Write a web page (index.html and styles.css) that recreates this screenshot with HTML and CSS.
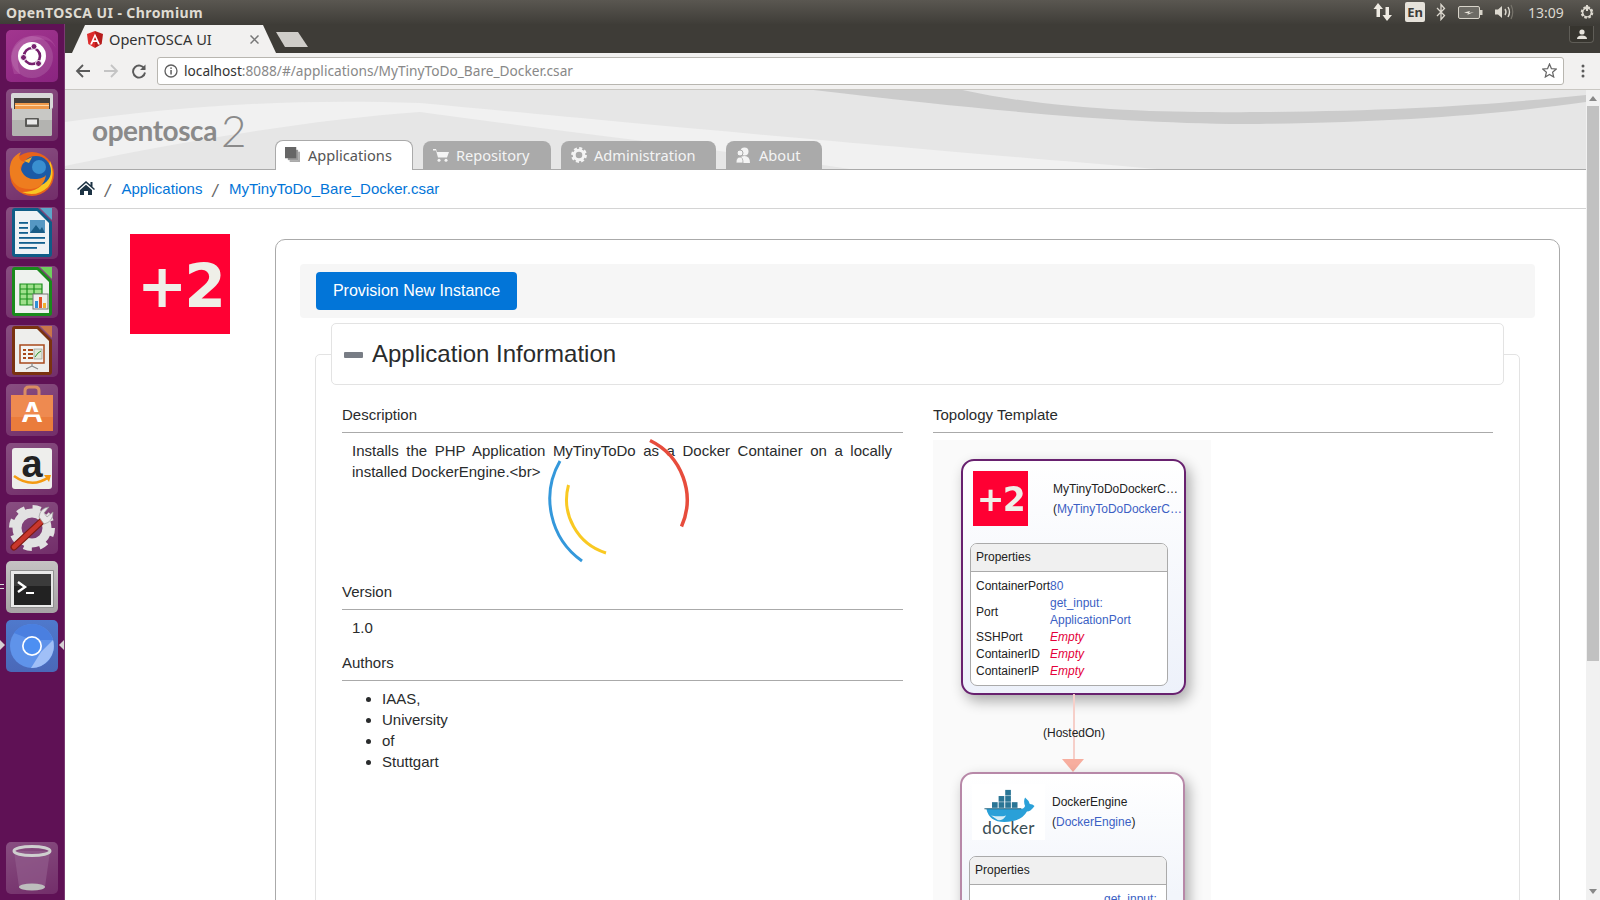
FILE: index.html
```html
<!DOCTYPE html>
<html lang="en">
<head>
<meta charset="utf-8">
<title>OpenTOSCA UI - Chromium</title>
<link rel="stylesheet" href="styles.css">
</head>
<body>
<div class="screen">
  <header class="panel">
    <span class="panel-title">OpenTOSCA UI - Chromium</span>
    <div class="tray">
      <svg class="tray-arrows" width="20" height="20" viewBox="0 0 20 20"><path d="M5 1 L10 7 H7 V15 H3.5 V7 H0.5 Z M14 19 L9.5 13 H12.500 V5 H16 V13 H19 Z" fill="#eeeae2"/></svg>
      <span class="tray-en">En</span>
      <svg class="tray-bt" width="10" height="18" viewBox="0 0 10 18"><path d="M1 5 L8.500 12.500 L5 16.500 V1.500 L8.500 5.500 L1 13" fill="none" stroke="#ddd9d0" stroke-width="1.300"/></svg>
      <svg class="tray-bat" width="25" height="13" viewBox="0 0 25 13"><rect x=".5" y=".5" width="21" height="12" rx="1.500" fill="#6d6b65" stroke="#d8d4ca"/><rect x="22" y="4" width="2.500" height="5" fill="#d8d4ca"/><path d="M6 6.500 L12 5 L11 7 L16 6 L9 9 L10.500 7.500Z" fill="#ece8de"/></svg>
      <svg class="tray-vol" width="20" height="16" viewBox="0 0 20 16"><path d="M1 5.500 H4 L8 2 V14 L4 10.500 H1Z" fill="#ddd9d0"/><path d="M11 5 Q13 8 11 11 M14 3 Q17 8 14 13" fill="none" stroke="#ddd9d0" stroke-width="1.400"/><path d="M17 1 Q20.500 8 17 15" fill="none" stroke="#77746c" stroke-width="1.200"/></svg>
      <span class="tray-time">13:09</span>
      <svg class="tray-power" width="16" height="16" viewBox="0 0 16 16"><circle cx="8" cy="8.500" r="5" fill="none" stroke="#ddd9d0" stroke-width="2.600" stroke-dasharray="2.400 1.500"/><circle cx="8" cy="8.500" r="4.400" fill="none" stroke="#ddd9d0" stroke-width="1.400"/><path d="M8 1 V7" stroke="#ddd9d0" stroke-width="2"/></svg>
    </div>
  </header>
  <div class="desktop">
    <nav class="launcher">
      <div class="tile tile-ubuntu">
        <svg viewBox="0 0 52 52"><path d="M8 44 Q-2 16 24 6 Q44 2 50 18 Q44 6 26 11 Q6 20 14 44Z" fill="#b65aa6" opacity=".45"/><circle cx="26" cy="27" r="21" fill="#fff" opacity=".13"/><circle cx="26" cy="26" r="14" fill="#fff"/><circle cx="26" cy="26" r="8" fill="none" stroke="#77216f" stroke-width="2.600"/><circle cx="28" cy="16.500" r="3" fill="#77216f" stroke="#fff"/><circle cx="17.500" cy="27.500" r="3" fill="#77216f" stroke="#fff"/><circle cx="32.500" cy="33.500" r="3" fill="#77216f" stroke="#fff"/></svg>
      </div>
      <div class="tile">
        <svg viewBox="0 0 52 52"><rect x="5" y="4" width="42" height="16" rx="2" fill="#d8d8d8"/><rect x="8" y="9" width="36" height="12" fill="#44403c"/><rect x="9" y="14" width="34" height="7" fill="#ef9a4a"/><rect x="9" y="16" width="34" height="1" fill="#ffd9a8"/><rect x="6" y="20" width="40" height="27" rx="1.500" fill="#b3b3b0"/><rect x="6" y="20" width="40" height="11" fill="#c8c8c5"/><rect x="19" y="29" width="14" height="9" rx="1" fill="#595956"/><rect x="21" y="30.500" width="10" height="5" fill="#e9e9e9"/></svg>
      </div>
      <div class="tile">
        <svg viewBox="0 0 52 52"><circle cx="26" cy="26" r="22" fill="#e8621a"/><path d="M44 13 Q50 28 42 39 Q30 50 16 44 Q36 44 41 28Z" fill="#f9c523"/><circle cx="30" cy="23" r="15" fill="#1c5aa6"/><circle cx="33" cy="19" r="7" fill="#3a8fd0"/><path d="M4 26 Q2 10 15 4 Q10 12 19 14 Q12 18 16 24 Q20 32 31 31 Q38 30 40 27 Q38 40 25 41 Q8 42 4 26Z" fill="#ee7d1f"/><path d="M18 13 L26 9 L23 15Z" fill="#f5ad2c"/></svg>
      </div>
      <div class="tile">
        <svg viewBox="0 0 52 52"><path d="M6 4 Q6 1 9 1 H32 L46 15 V47 Q46 50 43 50 H9 Q6 50 6 47Z" fill="#0f5c87"/><path d="M34 1 H46 V13Z" fill="#5da6c9"/><path d="M9 4 H31 L43 16 V47 H9Z" fill="#eef2f5"/><g fill="#125f8e"><rect x="13" y="15" width="9" height="1.800"/><rect x="13" y="20" width="9" height="1.800"/><rect x="13" y="25" width="9" height="1.800"/><rect x="13" y="30" width="26" height="1.800"/><rect x="13" y="35" width="26" height="1.800"/><rect x="13" y="40" width="18" height="1.800"/></g><rect x="24" y="13" width="15" height="13" fill="#5597c3"/><path d="M24 26 L30 18 L34 23 L36 20 L39 26Z" fill="#1a5d87"/></svg>
      </div>
      <div class="tile">
        <svg viewBox="0 0 52 52"><path d="M6 4 Q6 1 9 1 H32 L46 15 V47 Q46 50 43 50 H9 Q6 50 6 47Z" fill="#1a8a1c"/><path d="M34 1 H46 V13Z" fill="#6fcf5e"/><path d="M9 4 H31 L43 16 V47 H9Z" fill="#eef2ee"/><rect x="14" y="18" width="22" height="21" fill="#9fe08c"/><path d="M14 18 H36 V39 H14Z M14 23 H36 M14 28 H36 M14 33 H36 M21 18 V39 M28 18 V39" fill="none" stroke="#1b8f1d" stroke-width="1.200"/><rect x="27" y="28" width="15" height="15" fill="#eee" stroke="#777"/><rect x="29" y="35" width="3" height="7" fill="#2f8fd6"/><rect x="33" y="31" width="3" height="11" fill="#e0542a"/><rect x="37" y="37" width="3" height="5" fill="#f2b02e"/></svg>
      </div>
      <div class="tile">
        <svg viewBox="0 0 52 52"><path d="M6 4 Q6 1 9 1 H32 L46 15 V47 Q46 50 43 50 H9 Q6 50 6 47Z" fill="#7a3210"/><path d="M34 1 H46 V13Z" fill="#c9764a"/><path d="M9 4 H31 L43 16 V47 H9Z" fill="#eeeeec"/><rect x="14" y="20" width="24" height="18" fill="#f4f4f2" stroke="#a94a1c" stroke-width="1.500"/><g fill="#a94a1c"><rect x="17" y="24" width="3" height="2"/><rect x="17" y="28" width="3" height="2"/><rect x="17" y="32" width="3" height="2"/><rect x="22" y="24" width="5" height="2"/><rect x="22" y="28" width="5" height="2"/><rect x="22" y="32" width="5" height="2"/></g><rect x="28" y="24" width="8" height="10" fill="#dfe9d8" stroke="#888" stroke-width=".6"/><path d="M29 32 L32 28 L35 26" fill="none" stroke="#2d8f2d"/><path d="M26 38 V41 M26 41 L20 44 M26 41 L32 44" stroke="#888" stroke-width="1.200" fill="none"/></svg>
      </div>
      <div class="tile">
        <svg viewBox="0 0 52 52"><path d="M19 12 V7 Q19 3 23 3 H29 Q33 3 33 7 V12" fill="none" stroke="#d98d63" stroke-width="3"/><path d="M5 11 H47 V47 H5Z" fill="#ee8a50"/><path d="M5 33 H47 V47 H5Z" fill="#ea7c3c"/><text x="26" y="38" class="tile-a">A</text><rect x="14" y="28" width="24" height="2.500" fill="#ef8a4f"/></svg>
      </div>
      <div class="tile">
        <svg viewBox="0 0 52 52"><rect x="6" y="5" width="40" height="41" rx="3" fill="#eeeeec"/><text x="26" y="34" class="tile-amazon">a</text><path d="M8 33 Q26 46 43 34" fill="none" stroke="#f49a12" stroke-width="2.600"/><path d="M38 32 L45 32 L43 39Z" fill="#f49a12"/></svg>
      </div>
      <div class="tile">
        <svg viewBox="0 0 52 52"><circle cx="26" cy="26" r="15" fill="none" stroke="#e2e2e2" stroke-width="9"/><circle cx="26" cy="26" r="20" fill="none" stroke="#e2e2e2" stroke-width="6" stroke-dasharray="8 7.700"/><path d="M8 45 L37 18" stroke="#7e1a12" stroke-width="7" stroke-linecap="round"/><path d="M8 45 L37 18" stroke="#c9372c" stroke-width="4.500" stroke-linecap="round"/><path d="M33 15 Q34 6 43 5 L38 11 L41 15 L47 10 Q47 20 38 22Z" fill="#e8e8e8" stroke="#999" stroke-width=".7"/></svg>
      </div>
      <div class="tile tile-terminal">
        <svg viewBox="0 0 52 52"><rect x="4" y="9" width="44" height="38" rx="1" fill="#8f8f8f"/><rect x="5" y="10" width="42" height="36" fill="#e9e9e9"/><rect x="8" y="13" width="37" height="31" fill="#222"/><rect x="8" y="13" width="37" height="12" fill="#3b3b3b"/><path d="M12 21 L19 26 L12 31" fill="none" stroke="#fff" stroke-width="2.400"/><rect x="20" y="31" width="8" height="2" fill="#fff"/></svg>
      </div>
      <div class="tile tile-chromium">
        <svg viewBox="0 0 52 52"><circle cx="26" cy="26" r="22" fill="#5f93ea"/><path d="M8 13 A22 22 0 0 1 47 20 L26 20 Z" fill="#4a7fe0"/><path d="M47 20 A22 22 0 0 1 25 48 L35 32 Z" fill="#a0bff7"/><circle cx="26" cy="26" r="10" fill="#fff"/><circle cx="26" cy="26" r="8.300" fill="#4d8ff2"/></svg>
      </div>
      <div class="tile tile-trash">
        <svg viewBox="0 0 52 52"><path d="M8 9 L13 45 Q26 50 39 45 L44 9Z" fill="#94608f" opacity=".6"/><ellipse cx="26" cy="45" rx="13" ry="3.500" fill="#bdbdbd"/><ellipse cx="26" cy="9" rx="18" ry="4.500" fill="none" stroke="#cfcfcf" stroke-width="3"/></svg>
      </div>
      <span class="pip pip-term"></span>
      <span class="pip-left"></span>
      <span class="pip-right"></span>
    </nav>
    <div class="browser">
      <div class="tabstrip">
        <div class="tab">
          <svg class="favicon" width="16" height="17" viewBox="0 0 16 17"><path d="M8 0 L16 3 L14.700 13 L8 17Z" fill="#b71c1c"/><path d="M8 0 L0 3 L1.300 13 L8 17Z" fill="#dd2c2c"/><path d="M8 2.500 L3 13.500 H5 L6 11 H10 L11 13.500 H13Z M8 6 L9.400 9.300 H6.600Z" fill="#fff"/></svg>
          <span class="tab-title">OpenTOSCA UI</span>
          <svg class="tab-close" width="9" height="9" viewBox="0 0 9 9"><path d="M.5 .5 L8.500 8.500 M8.500 .5 L.5 8.500" stroke="#777" stroke-width="1.500"/></svg>
        </div>
        <div class="newtab"></div>
        <div class="profile"><svg width="12" height="11" viewBox="0 0 12 11"><circle cx="6" cy="3" r="2.600" fill="#e6e3dc"/><path d="M1 10 Q1 6.500 6 6.500 Q11 6.500 11 10Z" fill="#e6e3dc"/></svg></div>
      </div>
      <div class="toolbar">
        <svg class="tool" width="16" height="16" viewBox="0 0 16 16"><path d="M15 8 H2 M8 2 L2 8 L8 14" fill="none" stroke="#5a5a5a" stroke-width="1.800"/></svg>
        <svg class="tool" width="16" height="16" viewBox="0 0 16 16"><path d="M1 8 H14 M8 2 L14 8 L8 14" fill="none" stroke="#c4c4c4" stroke-width="1.800"/></svg>
        <svg class="tool" width="16" height="16" viewBox="0 0 16 16"><path d="M13.500 6 A6 6 0 1 0 14 9.500" fill="none" stroke="#5a5a5a" stroke-width="1.900"/><path d="M14.500 1.500 V7 H9Z" fill="#5a5a5a"/></svg>
        <div class="urlbox">
          <svg class="url-info" width="14" height="14" viewBox="0 0 14 14"><circle cx="7" cy="7" r="6" fill="none" stroke="#5f5f5f" stroke-width="1.300"/><rect x="6.300" y="6" width="1.500" height="4.500" fill="#5f5f5f"/><rect x="6.300" y="3.400" width="1.500" height="1.500" fill="#5f5f5f"/></svg>
          <span class="url"><span class="url-host">localhost</span>:8088/#/applications/MyTinyToDo_Bare_Docker.csar</span>
          <svg class="url-star" width="15" height="15" viewBox="0 0 15 15"><path d="M7.500 1 L9.400 5.600 L14.300 6 L10.600 9.200 L11.700 14 L7.500 11.400 L3.300 14 L4.400 9.200 L.7 6 L5.600 5.600Z" fill="none" stroke="#666" stroke-width="1.200"/></svg>
        </div>
        <svg class="menu-dots" width="4" height="14" viewBox="0 0 4 14"><circle cx="2" cy="2" r="1.500" fill="#5a5a5a"/><circle cx="2" cy="7" r="1.500" fill="#5a5a5a"/><circle cx="2" cy="12" r="1.500" fill="#5a5a5a"/></svg>
      </div>
      <div class="page">
        <div class="content">
          <div class="brandbar">
            <svg class="swoosh" width="1521" height="79" viewBox="65 90 1521 79" preserveAspectRatio="none"><path d="M65 122 C200 104 300 99 420 103 C600 120 800 139 1157 169 L850 169 C700 147 550 130 420 112 C300 120 150 148 65 166Z" fill="#f1f1f1"/><path d="M805 89 L958 89 C1060 112 1180 113 1259 112 C1400 111 1500 104 1586 95 L1586 102 C1500 114 1400 122 1259 124 C1130 124 1000 112 805 89Z" fill="#cbcbcb"/></svg>
            <div class="logo"><span class="logo-word">opentosca</span><span class="logo-two">2</span></div>
            <div class="navtabs">
              <div class="navtab navtab-active">
                <svg width="15" height="15" viewBox="0 0 16 16"><rect x="5" y="5" width="11" height="11" fill="#aaa"/><rect x="3" y="3" width="11" height="11" fill="#fff"/><rect x="3" y="3" width="11" height="11" fill="#999"/><rect x="0" y="0" width="12" height="12" fill="#666"/></svg>
                <span>Applications</span>
              </div>
              <div class="navtab navtab-repo">
                <svg width="16" height="14" viewBox="0 0 16 14"><path d="M0 1 H3 L4 4 H16 L14 9.500 H5 L3 2.500 H0Z" fill="#f4f4f4"/><circle cx="6" cy="12.200" r="1.500" fill="#f4f4f4"/><circle cx="13" cy="12.200" r="1.500" fill="#f4f4f4"/></svg>
                <span>Repository</span>
              </div>
              <div class="navtab navtab-admin">
                <svg width="16" height="16" viewBox="0 0 16 16"><circle cx="8" cy="8" r="4.800" fill="none" stroke="#f4f4f4" stroke-width="3"/><circle cx="8" cy="8" r="6.600" fill="none" stroke="#f4f4f4" stroke-width="2.600" stroke-dasharray="3 2.180"/></svg>
                <span>Administration</span>
              </div>
              <div class="navtab navtab-about">
                <svg width="14" height="16" viewBox="0 0 14 16"><circle cx="8.500" cy="4.500" r="4" fill="#f4f4f4"/><path d="M3 16 Q2 9 8.500 9 Q14 9 14 16Z" fill="#f4f4f4"/><circle cx="4" cy="6" r="3" fill="#f4f4f4" stroke="#aaa"/><path d="M0 16 Q0 10 4 10 Q7 10 7 16Z" fill="#f4f4f4" stroke="#aaa" stroke-width=".8"/></svg>
                <span>About</span>
              </div>
            </div>
          </div>
          <div class="crumbs">
            <svg class="crumb-home" width="18" height="14" viewBox="0 0 18 14"><path d="M9 0 L13.500 4 V1 H15.500 V5.700 L18 8 L17 9 L9 2 L1 9 L0 8Z" fill="#1d3344"/><path d="M3 9 L9 3.700 L15 9 V14 H11 V10 H7 V14 H3Z" fill="#1d3344"/></svg>
            <span class="crumb-sep">/</span>
            <a class="crumb-link">Applications</a>
            <span class="crumb-sep">/</span>
            <a class="crumb-link">MyTinyToDo_Bare_Docker.csar</a>
          </div>
          <div class="app">
            <div class="app-icon"><span>+2</span></div>
            <div class="card">
              <div class="actions"><button class="primary">Provision New Instance</button></div>
              <section class="accordion">
                <div class="acc-head"><span class="acc-minus"></span><h2>Application Information</h2></div>
                <div class="acc-body">
                  <div class="col">
                    <h3>Description</h3>
                    <p class="desc">Installs the PHP Application MyTinyToDo as a Docker Container on a locally installed DockerEngine.&lt;br&gt;</p>
                    <h3>Version</h3>
                    <p class="plain">1.0</p>
                    <h3>Authors</h3>
                    <ul class="authors"><li>IAAS,</li><li>University</li><li>of</li><li>Stuttgart</li></ul>
                  </div>
                  <div class="col">
                    <h3>Topology Template</h3>
                    <div class="topology">
                      <div class="node node-a">
                        <div class="node-head">
                          <div class="node-img"><span>+2</span></div>
                          <div class="node-names">
                            <div class="node-name">MyTinyToDoDockerC…</div>
                            <div class="node-name">(<a>MyTinyToDoDockerC…</a></div>
                          </div>
                        </div>
                        <div class="props">
                          <div class="props-head">Properties</div>
                          <div class="props-grid">
                            <span>ContainerPort</span><a>80</a>
                            <span>Port</span><a>get_input:<br>ApplicationPort</a>
                            <span>SSHPort</span><em>Empty</em>
                            <span>ContainerID</span><em>Empty</em>
                            <span>ContainerIP</span><em>Empty</em>
                          </div>
                        </div>
                      </div>
                      <div class="edge-line"></div>
                      <div class="edge-label">(HostedOn)</div>
                      <div class="edge-arrow"></div>
                      <div class="node node-b">
                        <div class="node-head">
                          <div class="docker">
                            <svg width="54" height="34" viewBox="0 0 54 36"><g fill="#2a7595"><rect x="23" y="2" width="6" height="6"/><rect x="16" y="8.500" width="6" height="6"/><rect x="23" y="8.500" width="6" height="6"/><rect x="9" y="15" width="6" height="6"/><rect x="16" y="15" width="6" height="6"/><rect x="23" y="15" width="6" height="6"/><rect x="30" y="15" width="6" height="6"/></g><path d="M3 22 H39 Q43 22 44 19 Q42 14 44 10 Q48 13 49 17 Q52 17 54 19 Q50 25 46 25 Q40 36 22 36 Q6 36 3 22Z" fill="#2aa0d8"/><path d="M1 22 H40" stroke="#1f5f7a" stroke-width="1"/><path d="M8 29 Q18 31 24 29 Q20 35 15 34Z" fill="#d9eef6"/></svg>
                            <span>docker</span>
                          </div>
                          <div class="node-names node-names-b">
                            <div class="node-name">DockerEngine</div>
                            <div class="node-name">(<a>DockerEngine</a>)</div>
                          </div>
                        </div>
                        <div class="props">
                          <div class="props-head">Properties</div>
                          <div class="props-grid props-grid-b"><span></span><a>get_input:</a></div>
                        </div>
                      </div>
                    </div>
                  </div>
                </div>
              </section>
            </div>
          </div>
          <svg class="spinner" width="160" height="140" viewBox="540 430 160 140"><path d="M560 460 A76 76 0 0 0 582 560" fill="none" stroke="#3498db" stroke-width="3"/><path d="M568.500 484 A56 56 0 0 0 606 552" fill="none" stroke="#f9c922" stroke-width="3"/><path d="M650 439.500 A66 66 0 0 1 681.500 525.500" fill="none" stroke="#e74c3c" stroke-width="3.500"/></svg>
        </div>
        <div class="scrollbar">
          <span class="sb-up"></span>
          <span class="sb-thumb"></span>
          <span class="sb-down"></span>
        </div>
      </div>
    </div>
  </div>
</div>
</body>
</html>
```

FILE: styles.css
```css
* { box-sizing: border-box; }
html, body { margin: 0; padding: 0; height: 100%; overflow: hidden; }
body { font-family: "Liberation Sans", Arial, sans-serif; color: #292b2c; background: #fff; }
.screen { width: 1600px; height: 900px; display: flex; flex-direction: column; overflow: hidden; }

/* top panel */
.panel { height: 24px; flex: none; display: flex; align-items: center; justify-content: space-between; padding-left: 6px; background: linear-gradient(#5a5751, #3f3d38); }
.panel-title { font: 700 14px "Noto Sans", sans-serif; color: #dfdbd2; letter-spacing: .42px; }
.tray { display: flex; align-items: center; height: 24px; width: 228px; padding-left: 1px; }
.tray > * { flex: none; }
.tray-en { margin-left: 12px; width: 20px; height: 20px; border-radius: 2px; background: #e6e2da; color: #3c3b37; font: 700 13px/20px "Noto Sans", sans-serif; text-align: center; }
.tray-bt { margin-left: 11px; }
.tray-bat { margin-left: 12px; }
.tray-vol { margin-left: 11px; }
.tray-time { margin-left: 14px; width: 37px; font: 400 14px "Noto Sans", sans-serif; color: #dcd8cf; }
.tray-power { margin-left: 14px; }

.desktop { flex: 1; display: flex; min-height: 0; }

/* launcher */
.launcher { width: 65px; flex: none; position: relative; display: flex; flex-direction: column; gap: 7px; padding: 6px 0 6px 6px; background: #5f1155; border-right: 1px solid #7a3a72; }
.tile { width: 52px; height: 52px; border-radius: 5px; background: linear-gradient(160deg, rgba(255,255,255,.26), rgba(255,255,255,.12)); flex: none; }
.tile svg { display: block; width: 52px; height: 52px; }
.tile-ubuntu { background: linear-gradient(150deg, #a2368f, #8a2480); }
.tile-terminal { background: linear-gradient(#c5c2c3, #a6a2a4); }
.tile-chromium { background: linear-gradient(#4f79cc, #4a68b8); }
.tile-trash { margin-top: auto; }
.tile-a { font: 700 30px "Liberation Sans", sans-serif; fill: #fff; text-anchor: middle; }
.tile-amazon { font: 700 38px "Liberation Sans", sans-serif; fill: #222; text-anchor: middle; }
.pip { position: absolute; left: 0; top: 560px; width: 4px; height: 5px; border-top: 1px solid #ddd; border-bottom: 1px solid #ddd; }
.pip-left { position: absolute; left: 0; top: 616px; border: 5px solid transparent; border-left: 5px solid #d6d0d4; border-right: 0; }
.pip-right { position: absolute; left: 59px; top: 616px; border: 5px solid transparent; border-right: 5px solid #d6d0d4; border-left: 0; }

/* browser */
.browser { flex: 1; min-width: 0; display: flex; flex-direction: column; }
.tabstrip { height: 29px; flex: none; display: flex; align-items: flex-end; position: relative; padding-left: 7px; background: #3e3c37; }
.tab { width: 204px; height: 28px; display: flex; align-items: center; padding-left: 15px; background: #f2f1f0; clip-path: polygon(0 100%, 13px 0, 191px 0, 204px 100%); }
.favicon { flex: none; }
.tab-title { margin-left: 6px; font: 400 14.6px "Noto Sans", sans-serif; color: #333; width: 141px; }
.tab-close { flex: none; }
.newtab { width: 32px; height: 15px; margin: 0 0 6px 0; background: #cfcdc9; clip-path: polygon(0 0, 22px 0, 32px 100%, 9px 100%); }
.profile { position: absolute; right: 6px; top: 2px; width: 25px; height: 17px; border: 1px solid #5f5d57; border-top: 0; border-radius: 0 0 4px 4px; display: flex; align-items: center; justify-content: center; background: #37352f; }
.toolbar { height: 37px; flex: none; display: flex; align-items: center; padding: 0 0 1px 10px; gap: 12px; background: #f2f1f0; border-bottom: 1px solid #c9c7c2; }
.tool { flex: none; }
.urlbox { width: 1407px; height: 28px; margin-left: -2px; display: flex; align-items: center; padding: 0 6px; background: #fff; border: 1px solid #b8b6b0; border-radius: 3px; }
.url-info { flex: none; }
.url { flex: 1; margin-left: 6px; font: 400 13.7px "Noto Sans", sans-serif; color: #888; white-space: nowrap; }
.url-host { color: #333; }
.url-star { flex: none; }
.menu-dots { flex: none; margin-left: 5px; }

/* page */
.page { flex: 1; min-height: 0; display: flex; }
.content { flex: 1; min-width: 0; position: relative; overflow: hidden; background: #fff; }
.brandbar { height: 80px; position: relative; background: #e6e6e6; border-bottom: 1px solid #aaa; }
.swoosh { position: absolute; left: 0; top: 0; display: block; }
.logo { position: absolute; left: 27px; top: 20px; display: flex; align-items: flex-end; gap: 4px; color: #8a8a8a; }
.logo-word { font: 700 28px/34px "Lato", sans-serif; letter-spacing: -.45px; margin-bottom: 3px; }
.logo-two { font: 300 44px/40px "Lato", sans-serif; }
.navtabs { position: absolute; left: 210px; bottom: -1px; display: flex; gap: 10px; align-items: flex-end; }
.navtab { height: 29px; display: flex; align-items: center; gap: 7px; padding: 0 0 2px 10px; font: 400 14.6px "Noto Sans", sans-serif; border-radius: 8px 8px 0 0; background: #aaa; color: #f4f4f4; }
.navtab-active { width: 138px; height: 30px; padding-left: 9px; gap: 8px; background: #fff; color: #555; border: 1px solid #aaa; border-bottom: 0; }
.navtab-repo { width: 128px; }
.navtab-admin { width: 155px; }
.navtab-about { width: 96px; gap: 9px; }
.navtab svg { flex: none; }
.crumbs { height: 39px; display: flex; align-items: center; padding: 0 0 2px 12px; border-bottom: 1px solid #d4d4d4; font-size: 15px; }
.crumb-home { flex: none; }
.crumb-sep { margin: 7px 11.500px 0 10px; font: italic 400 18px "Liberation Sans", sans-serif; color: #666; }
.crumb-link { color: #0275d8; }
.app { display: flex; align-items: flex-start; padding: 25px 26px 0 65px; }
.app-icon { width: 100px; height: 100px; flex: none; display: flex; align-items: center; justify-content: center; padding-top: 3px; background: #ff0033; color: #efefe8; font: 700 60px "DejaVu Sans", sans-serif; letter-spacing: -3px; }
.app-icon span { filter: blur(.7px); }
.card { flex: 1; min-width: 0; height: 800px; margin: 5px 0 0 45px; padding: 24px; border: 1px solid #aaa; border-radius: 10px; }
.actions { height: 54px; padding: 8px 16px; background: #f6f6f6; border-radius: 4px; }
.primary { width: 201px; height: 38px; padding: 0; border: 0; border-radius: 4px; background: #0275d8; color: #fff; font: 400 16px "Liberation Sans", sans-serif; }
.accordion { margin: 36px 15px 0; height: 700px; border: 1px solid #e3e3e3; border-radius: 5px; }
.acc-head { height: 62px; margin: -32px 15px 0; display: flex; align-items: center; gap: 9px; padding-left: 12px; background: #fff; border: 1px solid #e3e3e3; border-radius: 5px; }
.acc-minus { width: 19px; height: 6px; border-radius: 1px; background: #787d85; margin-top: 2px; }
.acc-head h2 { margin: 0; font: 400 24px "Liberation Sans", sans-serif; color: #292b2c; }
.acc-body { display: grid; grid-template-columns: 561px 560px; gap: 30px; padding: 19px 0 0 26px; }
.col h3 { margin: 0; height: 29px; font: 400 15px/21px "Liberation Sans", sans-serif; border-bottom: 1px solid #aaa; }
.desc { margin: 7px 11px 0 10px; height: 141px; font-size: 15px; line-height: 21px; text-align: justify; }
.plain { margin: 7px 0 0 10px; height: 35px; font-size: 15px; line-height: 21px; }
.authors { margin: 7px 0 0; padding-left: 40px; font-size: 15px; line-height: 21px; }

/* topology canvas */
.topology { position: relative; width: 278px; height: 520px; margin-top: 7px; background: #fafafa; }
.node { position: absolute; width: 225px; padding: 1px 0 0 1px; border: 2px solid #68216f; border-radius: 13px; background: linear-gradient(#fff, #edf1fa); box-shadow: 4px 6px 14px rgba(0,0,0,.32); font-size: 12px; color: #222; }
.node-a { left: 28px; top: 19px; height: 236px; }
.node-b { left: 27px; top: 332px; height: 260px; border-color: #b788a8; background: linear-gradient(#fff, #f2f5fb 120px); }
.node-head { display: flex; height: 81px; padding: 9px 0 0 9px; }
.node-img { width: 55px; height: 55px; flex: none; display: flex; align-items: center; justify-content: center; padding-top: 2px; background: #ff0033; color: #efefe8; font: 700 33px "DejaVu Sans", sans-serif; letter-spacing: -1.500px; }
.node-img span { filter: blur(.5px); }
.node-names { margin-left: 25px; width: 132px; padding-top: 8px; line-height: 20px; white-space: nowrap; }
.node a { color: #3b5fc4; }
.docker { width: 73px; height: 56px; flex: none; background: #fff; display: flex; flex-direction: column; align-items: center; }
.docker svg { display: block; margin-top: 4px; }
.docker span { margin-top: -2px; font: 400 17px/15px "Lato", sans-serif; color: #394d54; letter-spacing: .3px; }
.node-names-b { margin-left: 7px; padding-top: 8px; }
.props { margin-left: 6px; width: 198px; background: #fff; border: 1px solid #aaa; border-radius: 7px; overflow: hidden; }
.node-a .props { height: 143px; }
.props-head { height: 28px; padding-left: 5px; line-height: 27px; background: #f0f0f0; border-bottom: 1px solid #aaa; }
.props-grid { display: grid; grid-template-columns: 74px 1fr; padding: 6px 5px 0; line-height: 17px; align-items: center; }
.props-grid em { color: #e4003a; }
.props-grid-b a { padding-left: 55px; }
.edge-line { position: absolute; left: 140px; top: 254px; width: 2px; height: 68px; background: #f6cfc9; }
.edge-label { position: absolute; left: 79px; top: 285px; width: 124px; text-align: center; font-size: 12px; line-height: 16px; color: #222; }
.edge-arrow { position: absolute; left: 129px; top: 319px; width: 22px; height: 13px; background: #f7ae9f; clip-path: polygon(0 0, 100% 0, 50% 100%); }

.spinner { position: absolute; left: 475px; top: 341px; }

/* scrollbar */
.scrollbar { width: 14px; flex: none; position: relative; background: #f1f1f1; }
.sb-up { position: absolute; left: 3px; top: 6px; border: 4px solid transparent; border-bottom: 5px solid #888; border-top: 0; }
.sb-thumb { position: absolute; left: 1px; top: 16px; width: 12px; height: 555px; background: #c1c1c1; }
.sb-down { position: absolute; left: 3px; bottom: 6px; border: 4px solid transparent; border-top: 5px solid #888; border-bottom: 0; }
```
